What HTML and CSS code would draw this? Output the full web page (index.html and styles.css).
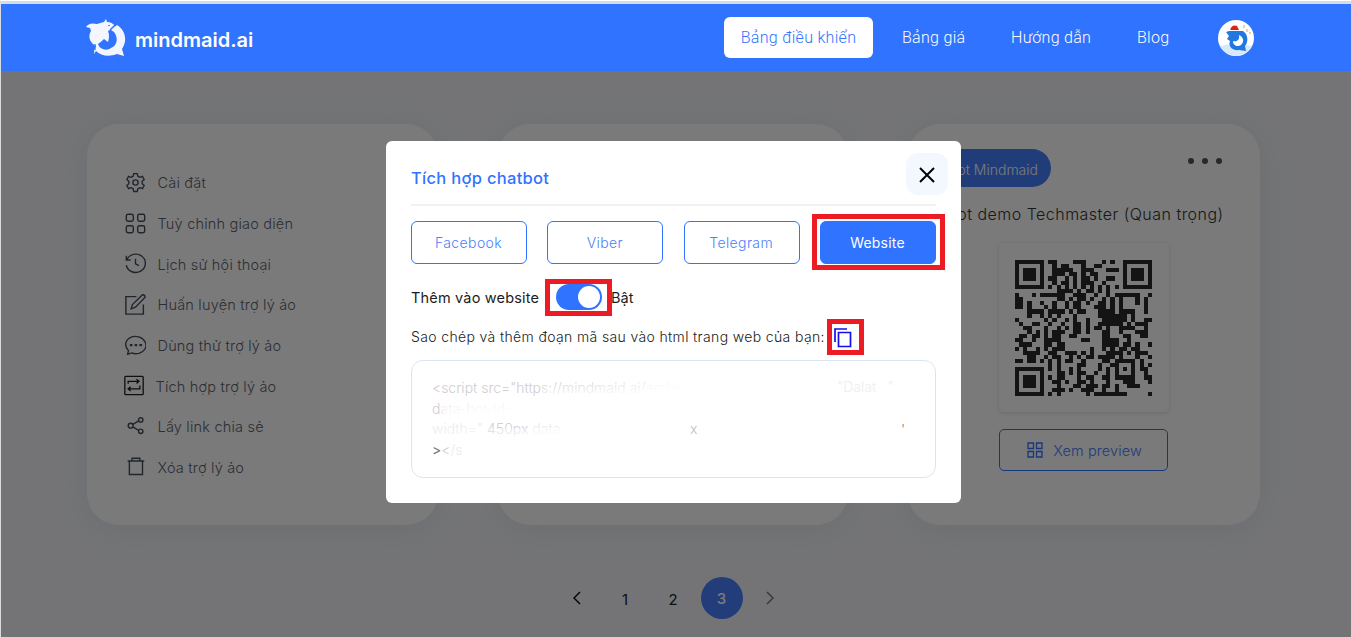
FILE: index.html
```html
<!DOCTYPE html>
<html lang="vi">
<head>
<meta charset="utf-8">
<title>mindmaid.ai</title>
<link rel="stylesheet" href="styles.css">
</head>
<body>
<div class="page">
  <header class="header">
    <div class="brand">
      <svg class="brand-mark" viewBox="0 0 40 38"><path fill="#f3f6ff" d="M0 8Q3 3 11 5L18 3 20 0 21 3Q26 3 29 7L26 10 22 12Q24 17 22 23L18 20Q15 23 12 25C14 31 21 32 25 29C32 26 32 18 28 13L25 11 31 6C39 11 42 21 36 30L38 37 31 35C23 38 15 37 10 32L8 35Q8 30 10 27C3 23 2 17 5 12L4 9Z"/><path stroke="#2f73ff" stroke-width="1.300" d="M30 5 24 11M9 25v6"/><circle cx="23" cy="6.500" r=".8" fill="#2f73ff"/></svg>
      <span class="brand-name">mindmaid.ai</span>
    </div>
    <nav class="nav">
      <a class="nav-active"><span class="n1">Bảng điều khiển</span></a>
      <a class="n2">Bảng giá</a><a class="n3">Hướng dẫn</a><a class="n4">Blog</a>
      <svg class="avatar" viewBox="0 0 36 36"><circle cx="18" cy="18" r="18" fill="#fff"/><path d="M2 26Q18 22 34 26Q28 36 18 36T2 26" fill="#d8e9f9"/><path fill="#2178e0" d="M8 12 11 11 25 11C31 15 30 23 27 26L28 31 21 30C14 31 10 26 12 21L9 19 11 16Z"/><path fill="#fff" d="M21 15C22 20 19 22 15 21C15 26 20 27 23 25C27 21 25 17 21 15Z"/><path fill="#d72420" d="M12 10Q14 4 19 6L21 10Z"/><path stroke="#e8d49e" stroke-width="2" d="M26 5v3M29 9v3M32 12v2"/></svg>
    </nav>
  </header>
  <main class="main">
    <div class="cards">
      <section class="card menu">
        <div class="item"><svg viewBox="0 0 24 24"><circle cx="12" cy="12" r="3"/><path d="M10 1.8h4l.7 3 2.2 1.3 3-1 2 3.5-2.3 2v2.8l2.3 2-2 3.5-3-1-2.2 1.3-.7 3h-4l-.7-3-2.2-1.3-3 1-2-3.5 2.3-2v-2.8l-2.3-2 2-3.5 3 1 2.2-1.3Z"/></svg><span>Cài đặt</span></div>
        <div class="item"><svg viewBox="0 0 24 24"><rect x="1.5" y="1.5" width="8" height="8" rx="2"/><rect x="14.5" y="1.5" width="8" height="8" rx="2"/><rect x="1.5" y="14.5" width="8" height="8" rx="2"/><rect x="14.5" y="14.5" width="8" height="8" rx="2"/></svg><span>Tuỳ chỉnh giao diện</span></div>
        <div class="item"><svg viewBox="0 0 24 24"><path d="M1.5 3v5h5M2 8A11 10.5 0 1 1 1.5 14M12 6.5v6l4 2"/></svg><span>Lịch sử hội thoại</span></div>
        <div class="item"><svg viewBox="0 0 24 24"><path d="M13 3H1v20h20V12M7 17l1.5-5L20 .8q3 0 3 3L12 15Z"/></svg><span>Huấn luyện trợ lý ảo</span></div>
        <div class="item"><svg viewBox="0 0 24 24"><path d="M3 22l1-4C-1 13 0 6 6 3S20 2 23 8 22 19 16 21Q11 22 8 20.500Z"/><path class="dots" d="M5.500 11.500h3M11 11.500h3M16.500 11.500h3"/></svg><span>Dùng thử trợ lý ảo</span></div>
        <div class="item dark"><svg viewBox="0 0 24 24"><rect x="1" y="1" width="22" height="22" rx="1"/><path d="M5 10V7h12M15 4.500 18 7l-3 2.500M19 12v4H6M8 13.500 5 16l3 2.500"/></svg><span>Tích hợp trợ lý ảo</span></div>
        <div class="item"><svg viewBox="0 0 24 24"><circle cx="6.500" cy="11" r="2.800"/><circle cx="18" cy="4.500" r="2.500"/><circle cx="18" cy="17.500" r="2.500"/><path d="m9 9.500 6.500-4M9 12.500l6.500 4"/></svg><span>Lấy link chia sẻ</span></div>
        <div class="item"><svg viewBox="0 0 24 24"><path d="M3 4.500h19M8 4V1.500h9V4M5 5v15h15V5"/></svg><span>Xóa trợ lý ảo</span></div>
      </section>
      <section class="card"></section>
      <section class="card bot">
        <div class="bot-top"><span class="pill">Bot Mindmaid</span><span class="more"><i></i><i></i><i></i></span></div>
        <div class="bot-title">Bot demo Techmaster (Quan trọng)</div>
        <div class="qr"><svg id="qr" viewBox="0 0 33 33" preserveAspectRatio="none" shape-rendering="crispEdges"></svg></div>
        <div class="preview"><svg viewBox="0 0 16 16"><path d="M1 1h5.500v5.500H1zM9.500 1H15v5.500H9.500zM1 9.500h5.500V15H1zM9.500 9.500H15V15H9.500z"/></svg><span>Xem preview</span></div>
      </section>
    </div>
    <div class="pager">
      <svg viewBox="0 0 8 14"><path d="M7 1 1 7l6 6"/></svg><span>1</span><span>2</span><b>3</b><svg class="next" viewBox="0 0 8 14"><path d="m1 1 6 6-6 6"/></svg>
    </div>
  </main>
  <div class="overlay">
    <div class="modal">
      <div class="modal-head"><h2>Tích hợp chatbot</h2><span class="close"><svg viewBox="0 0 16 16"><path d="m1 1 14 14M15 1 1 15"/></svg></span></div>
      <div class="tabs"><span>Facebook</span><span>Viber</span><span>Telegram</span><span class="on">Website</span></div>
      <div class="switch-row"><span class="switch-label">Thêm vào website</span><span class="switch"><i></i></span><span class="state">Bật</span></div>
      <div class="copy-row"><span>Sao chép và thêm đoạn mã sau vào html trang web của bạn:</span><svg viewBox="0 0 18 20"><path d="M1 14V1h12M4.500 4.500h12v14h-12z"/></svg></div>
      <div class="code">
        <div><em>&lt;script src="https://mindmaid.ai/</em>embe</div>
        <div><em>d</em>ata-bot-id=</div>
        <div>width=" <em>450px</em> data</div>
        <div><strong>&gt;</strong><em>&lt;</em>/s</div>
        <span class="haze h1"></span><span class="haze h2"></span><span class="haze h3"></span><span class="scrap s1">"Dalat &nbsp; "</span><span class="scrap s2">'</span><span class="scrap s3">x</span>
      </div>
    </div>
    <span class="mark mark-tab"></span><span class="mark mark-switch"></span><span class="mark mark-copy"></span>
  </div>
</div>
<script src="qr.js"></script>
</body>
</html>
```
FILE: styles.css
```css
*{box-sizing:border-box}
body{margin:0;font-family:Inter,"Liberation Sans",sans-serif;overflow:hidden}
.page{position:relative;width:1351px;height:637px;border-left:1px solid #d9dde0;border-top:1px solid #fff;background:#f2f3f6;overflow:hidden}
.header{height:70px;border-top:3px solid #d3dde3;background:#2f73ff;display:flex;justify-content:space-between;padding:0 97px 0 85px}
.brand{display:flex;align-items:center;gap:9px;height:67px}
.brand-mark{width:40px;height:38px}
.brand-name{color:#fff;font-weight:600;font-size:20px;padding-top:4px}
.nav{display:flex;align-items:center;height:67px;color:#fff;font:300 16px Roboto,sans-serif;letter-spacing:.3px}
.nav-active{background:#fff;color:#2f73ff;width:149px;height:41px;border-radius:6px;display:flex;align-items:center;justify-content:center;margin-right:29px}
.n2{width:109px}.n3{width:126px}.n4{width:81px}
.avatar{width:36px;height:36px}
.main{padding:53px 86px 0}
.cards{display:grid;grid-template-columns:351px 350px 352px;gap:60px}
.card{height:401px;border-radius:32px;background:#fff;box-shadow:0 4px 30px rgba(120,145,180,.13)}
.menu{padding:38px 0 0 38px}
.item{display:flex;align-items:center;height:40.7px;gap:12px;font-size:14.500px;font-weight:300;letter-spacing:.2px;color:#5c626f}
.item svg{width:21px;height:21px;fill:none;stroke:#465060;stroke-width:1.600}
.item span{padding-top:1px;margin-left:-.5px}
.item .dots{stroke-width:2.600}
.item.dark svg{stroke:#222;width:20px;margin-left:-1px}
.bot{display:flex;flex-direction:column;align-items:center;padding-top:25px}
.bot-top{width:100%;display:flex;justify-content:space-between;padding:0 38px 0 0}
.pill{height:38px;width:143px;border-radius:19px;background:#4380ff;color:#fff;font-size:14px;font-weight:300;line-height:41px;text-align:right;padding-right:13px;white-space:nowrap}
.more{display:flex;gap:8px;padding-top:9px}
.more i{width:6px;height:6px;border-radius:3px;background:#555}
.bot-title{height:57px;line-height:55px;font-size:16px;font-weight:300;letter-spacing:.48px;color:#333;white-space:nowrap;margin-left:2px}
.qr{width:170px;height:169px;margin-top:-1px;padding:17px 16px 15px;border-radius:4px;box-shadow:0 1px 4px rgba(0,0,0,.13)}
.qr svg{width:137px;height:136px;display:block;fill:#2a2a2a}
.preview{width:169px;height:42px;margin:17px 0 0 -1px;border:1px solid #2f73ff;border-radius:5px;display:flex;align-items:center;justify-content:center;gap:10px;color:#4380ff;font-size:14.500px;font-weight:300;letter-spacing:.1px;padding-left:2px}
.preview svg{width:16px;height:16px;fill:none;stroke:#2f73ff;stroke-width:1.300}
.pager{display:flex;align-items:center;margin:52px 0 0 486px;font-size:15px;height:42px}
.pager svg{width:8px;height:14px;fill:none;stroke:#111;stroke-width:1.500}
.pager span{width:48px;text-align:center;padding-top:2px;color:#222}
.pager svg+span{margin-left:20px}
.pager b{width:42px;height:42px;border-radius:50%;background:#4a80ff;color:#fff;text-align:center;line-height:44px;font-weight:500;margin:0 23px 0 4px;padding-right:1px}
.pager .next{stroke:#777}
.overlay{position:absolute;left:0;right:0;top:70px;bottom:0;background:rgba(0,0,0,.52)}
.modal{position:absolute;left:385px;top:70px;width:575px;height:362px;border-radius:6px;background:#fff;padding:0 25px}
.modal-head{height:65px;border-bottom:2px solid #f0f1f3;display:flex;justify-content:space-between}
.modal-head h2{margin:27px 0 0;line-height:21px;font-size:16.500px;font-weight:500;letter-spacing:.3px;color:#2f73ff}
.close{width:42px;height:42px;margin:12px -12px 0 0;background:#f3f8fe;border-radius:12px;display:flex;align-items:center;justify-content:center}
.close svg{width:16px;height:16px;margin-top:2px;fill:none;stroke:#000;stroke-width:2}
.tabs{display:flex;justify-content:space-between;padding-top:15px}
.tabs span{width:116px;height:43px;border:1px solid #2f73ff;border-radius:6px;color:#4a80ff;font-size:14px;font-weight:300;display:flex;align-items:center;justify-content:center;letter-spacing:.4px;padding-right:1px}
.tabs .on{background:#2f73ff;color:#fff;font-weight:400;letter-spacing:.2px}
.switch-row{height:26px;margin-top:20px;display:flex;align-items:center;font-size:14.500px;color:#1c1c22}
.switch-label{width:145px;white-space:nowrap;letter-spacing:.18px}
.switch{width:46px;height:26px;border-radius:13px;background:#2f73ff;padding:2px;display:flex;justify-content:flex-end}
.switch i{width:22px;height:22px;border-radius:50%;background:#fff}
.state{margin-left:9px}
.copy-row{height:28px;margin-top:13px;display:flex;align-items:center;gap:9px;font-size:14px;font-weight:300;letter-spacing:.36px;color:#222;white-space:nowrap}
.copy-row span{margin-top:-1px}
.copy-row svg{width:18px;height:20px;margin-top:2px;fill:none;stroke:#1411e8;stroke-width:1.700}
.code{position:relative;height:118px;margin-top:9px;border:1px solid #dce4f3;border-radius:12px;padding:17px 20px;font-size:14px;font-weight:300;line-height:20.600px;color:#eceaed;white-space:nowrap}
.code em{font-style:normal;color:#d0cdd1}
.code strong{font-weight:400;color:#777}
.haze{position:absolute;background:linear-gradient(175deg,transparent,#fff 75%)}
.h1{left:130px;top:21px;width:150px;height:14px}
.h2{left:20px;top:67px;width:190px;height:12px}
.h3{left:32px;top:40px;width:75px;height:16px}
.scrap{position:absolute;color:#e4e1e4}
.s1{left:425px;top:16px;color:#f0edf0}.s2{left:489px;top:59px;color:#927080}.s3{left:278px;top:58px;color:#c2bdc2}
.mark{position:absolute;border:5px solid #ed1c24}
.mark-tab{left:811px;top:143px;width:133px;height:56px}
.mark-switch{left:544px;top:208px;width:67px;height:37px}
.mark-copy{left:826px;top:248px;width:37px;height:36px}
```
FILE: qr.js
```js
const finder = ["#######", "#.....#", "#.###.#", "#.###.#", "#.###.#", "#.....#", "#######", "......."];
const top8 = ["##....###....#.#.", ".#.##...#..##....", ".#####..###...###", ".###.##.#.##.....", "##..#.#.##.#..##.", ".#.##.#.###..#...", "#.#.#.#.#.#.#.#.#", "..####.#.##.#.#.."];
const middle = [
"#...#.######..###..#..#.######..#",
"##........##.#.##.#..#.#.#...#.#.",
"##.#..#..#..#.##.#..##.#.#...#.#.",
"##.#...#.#..#.##...###.#.#.....#.",
"...####.####.#.##...####.####..#.",
"...#..#.#.#...#.....#######.#....",
"#......#.#..#.#..#...######.#..##",
".#..##..#..#..##.#..######.#.###.",
"..##...#..#.#.##.#.##.#..####..#.",
"...#.#.#.###..##.#...##..#...###.",
".##.##.#.##..##......##...##..##.",
"##..#..####.....##...####..#.....",
".###...##.##.........####.##.#..#",
"#.#..#.#.###......#..#.#.##.##...",
"..####..##..###.#.#...####.#.###.",
"...##..#.##..#.#.##.####.#...#..#"];
const bottom = ["#.#.##..#....##.#####.#..", "#.#....##...#..##...#.#.#", "#.#..#.#....#.#.#.#.#.##.", "..##.#.##..#..#.#...#..#.", "#.##...#.##..##.#####..##", ".##.#..##.#...#...###...#", "..#...##.###.##.#..###...", ".###.#..###..#..#........", "#.#......#.########.....#"];
// The lower-left finder starts at row 26, after two rows of data beside it.
const rows = [
  ...top8.map((s, i) => finder[i] + "." + s + "." + finder[i]),
  ...middle,
  "##.##.#." + bottom[0],
  "........" + bottom[1],
  ...bottom.slice(2).map((s, i) => finder[i] + "." + s)
];
let d = "";
rows.forEach((r, y) => [...r].forEach((c, x) => { if (c === "#" && x < 33) d += `M${x} ${y}h1v1h-1z`; }));
document.getElementById("qr").innerHTML = `<path d="${d}"/>`;
```
